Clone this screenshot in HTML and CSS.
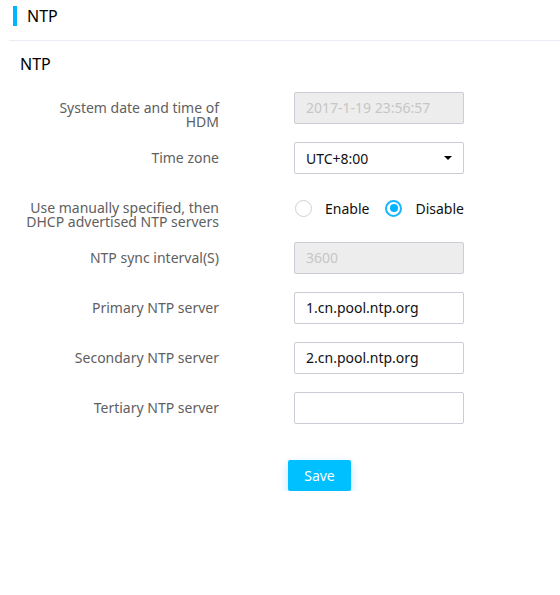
FILE: index.html
```html
<!DOCTYPE html>
<html>
<head>
<meta charset="utf-8">
<link rel="stylesheet" href="styles.css">
</head>
<body>
<div class="header"><span class="bar"></span><span class="header-title">NTP</span></div>
<div class="section-title">NTP</div>
<div class="form">
  <div class="label">System date and time of HDM</div>
  <div class="field input disabled">2017-1-19 23:56:57</div>

  <div class="label">Time zone</div>
  <div class="field input select"><span>UTC+8:00</span><span class="caret"></span></div>

  <div class="label">Use manually specified, then DHCP advertised NTP servers</div>
  <div class="field radios">
    <span class="radio"></span><span class="radio-text">Enable</span>
    <span class="radio checked"></span><span class="radio-text">Disable</span>
  </div>

  <div class="label">NTP sync interval(S)</div>
  <div class="field input disabled">3600</div>

  <div class="label">Primary NTP server</div>
  <div class="field input">1.cn.pool.ntp.org</div>

  <div class="label">Secondary NTP server</div>
  <div class="field input">2.cn.pool.ntp.org</div>

  <div class="label">Tertiary NTP server</div>
  <div class="field input"></div>

  <div class="actions"><button class="save">Save</button></div>
</div>
</body>
</html>
```
FILE: styles.css
```css
html, body {
  margin: 0;
  padding: 0;
  background: #fff;
}
body {
  font-family: "Noto Sans", "Open Sans", sans-serif;
  font-size: 14px;
  color: #000;
  width: 560px;
}
.header {
  margin-left: 9px;
  padding-left: 4px;
  padding-top: 6px;
  height: 34px;
  border-bottom: 1px solid #ebebf5;
  display: flex;
  align-items: flex-start;
}
.bar {
  width: 4px;
  height: 20px;
  background: #00b4ff;
}
.header-title {
  margin-left: 10px;
  font-size: 16px;
  line-height: 20px;
}
.section-title {
  margin: 12px 0 0 20px;
  font-size: 16px;
  line-height: 22px;
}
.form {
  margin-top: 17px;
  display: grid;
  grid-template-columns: 219px 170px;
  column-gap: 75px;
  row-gap: 18px;
  grid-auto-rows: minmax(32px, auto);
}
.label {
  box-sizing: border-box;
  height: 32px;
  text-align: right;
  color: #606060;
  line-height: 14px;
  padding-top: 9px;
  padding-left: 24px;
}
.field {
  box-sizing: border-box;
  height: 32px;
}
.input {
  border: 1px solid #ccccd4;
  border-radius: 2px;
  padding: 0 11px;
  line-height: 30px;
  color: #111;
  white-space: nowrap;
}
.disabled {
  background: #ededed;
  color: #c6c6c6;
}
.select {
  display: flex;
  justify-content: space-between;
  align-items: center;
  line-height: normal;
}
.caret {
  width: 0;
  height: 0;
  border-left: 4px solid transparent;
  border-right: 4px solid transparent;
  border-top: 4px solid #000;
}
.radios {
  display: flex;
  align-items: center;
  padding-left: 1px;
}
.radio {
  flex: 0 0 auto;
  box-sizing: border-box;
  width: 17px;
  height: 17px;
  border: 1px solid #cfcfd6;
  border-radius: 50%;
  position: relative;
}
.radio.checked {
  border: 2px solid #18b6ff;
}
.radio.checked::after {
  content: "";
  position: absolute;
  left: 2.5px;
  top: 2.5px;
  width: 8px;
  height: 8px;
  border-radius: 50%;
  background: #00b4ff;
}
.radio-text {
  flex: 0 0 auto;
  margin-left: 13px;
  margin-right: 16px;
  color: #111;
}
.actions {
  grid-column: 2;
  margin-left: -6px;
  padding-top: 18px;
}
.save {
  display: block;
  width: 63px;
  height: 31px;
  border: none;
  border-radius: 2px;
  background: #00c0ff;
  color: #fff;
  font-family: "Noto Sans", "Open Sans", sans-serif;
  font-size: 14px;
  padding: 0;
  box-shadow: 0 4px 10px rgba(0, 150, 255, 0.28);
}
```
